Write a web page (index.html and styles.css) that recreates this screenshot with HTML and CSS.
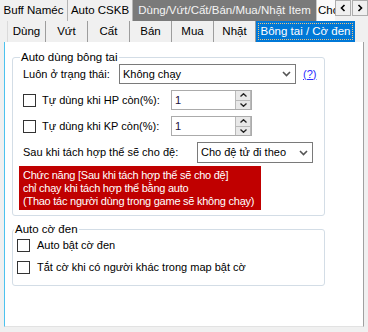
FILE: index.html
```html
<!DOCTYPE html>
<html lang="vi">
<head>
    <meta charset="UTF-8">
    <title>Bông tai / Cờ đen</title>
    <link rel="stylesheet" href="styles.css">
</head>
<body>

    <div class="top-tabs">
        <span class="ttab t-buff">Buff Naméc</span>
        <span class="ttab t-cskb">Auto CSKB</span>
        <span class="ttab t-item">Dùng/Vứt/Cất/Bán/Mua/Nhặt Item</span>
        <span class="ttab t-cho">Cho</span>
        <span class="scroll-btn">
            <svg width="6" height="8" viewBox="0 0 6 8"><polyline points="4.5,1 1.5,4 4.5,7" fill="none" stroke="#000" stroke-width="1.6"/></svg>
        </span>
        <span class="scroll-btn">
            <svg width="6" height="8" viewBox="0 0 6 8"><polyline points="1.5,1 4.5,4 1.5,7" fill="none" stroke="#000" stroke-width="1.6"/></svg>
        </span>
    </div>

    <div class="sub-tabs">
        <span class="stab s-dung">Dùng</span>
        <span class="stab">Vứt</span>
        <span class="stab">Cất</span>
        <span class="stab">Bán</span>
        <span class="stab">Mua</span>
        <span class="stab">Nhặt</span>
        <span class="stab active"><span class="focus">Bông tai / Cờ đen</span></span>
    </div>

    <div class="panel">
        <fieldset class="group group-bongtai">
            <legend>Auto dùng bông tai</legend>

            <div class="row">
                <span class="lbl lbl-state">Luôn ở trạng thái:</span>
                <span class="combo combo-state">
                    <span>Không chạy</span>
                    <svg width="9" height="6" viewBox="0 0 9 6"><polyline points="1,1 4.5,4.5 8,1" fill="none" stroke="#555" stroke-width="1.6"/></svg>
                </span>
                <a class="help">(?)</a>
            </div>

            <div class="row">
                <span class="check-label lbl-pct"><span class="box"></span>Tự dùng khi HP còn(%):</span>
                <span class="num">
                    <span class="num-val">1</span>
                    <span class="spin">
                        <span class="spin-btn"><svg width="7" height="4" viewBox="0 0 7 4"><polyline points="0.5,3.5 3.5,0.7 6.5,3.5" fill="none" stroke="#222" stroke-width="1.3"/></svg></span>
                        <span class="spin-btn"><svg width="7" height="4" viewBox="0 0 7 4"><polyline points="0.5,0.5 3.5,3.3 6.5,0.5" fill="none" stroke="#222" stroke-width="1.3"/></svg></span>
                    </span>
                </span>
            </div>

            <div class="row">
                <span class="check-label lbl-pct"><span class="box"></span>Tự dùng khi KP còn(%):</span>
                <span class="num">
                    <span class="num-val">1</span>
                    <span class="spin">
                        <span class="spin-btn"><svg width="7" height="4" viewBox="0 0 7 4"><polyline points="0.5,3.5 3.5,0.7 6.5,3.5" fill="none" stroke="#222" stroke-width="1.3"/></svg></span>
                        <span class="spin-btn"><svg width="7" height="4" viewBox="0 0 7 4"><polyline points="0.5,0.5 3.5,3.3 6.5,0.5" fill="none" stroke="#222" stroke-width="1.3"/></svg></span>
                    </span>
                </span>
            </div>

            <div class="row row-tach">
                <span class="lbl lbl-tach">Sau khi tách hợp thể sẽ cho đệ:</span>
                <span class="combo combo-de">
                    <span>Cho đệ tử đi theo</span>
                    <svg width="9" height="6" viewBox="0 0 9 6"><polyline points="1,1 4.5,4.5 8,1" fill="none" stroke="#555" stroke-width="1.6"/></svg>
                </span>
            </div>

            <div class="warning">
                Chức năng [Sau khi tách hợp thể sẽ cho đệ]<br>
                chỉ chạy khi tách hợp thể bằng auto<br>
                (Thao tác người dùng trong game sẽ không chạy)
            </div>
        </fieldset>

        <fieldset class="group group-co">
            <legend>Auto cờ đen</legend>
            <div class="co-row"><span class="box"></span>Auto bật cờ đen</div>
            <div class="co-row"><span class="box"></span>Tắt cờ khi có người khác trong map bật cờ</div>
        </fieldset>
    </div>

</body>
</html>
```

FILE: styles.css
```css
* {
    box-sizing: border-box;
}

body {
    margin: 0;
    width: 368px;
    height: 332px;
    overflow: hidden;
    background-color: #f0f0f0;
    font-family: "Liberation Sans", Arial, sans-serif;
    font-size: 11px;
    line-height: 13px;
    color: #000;
}

/* top tab row */
.top-tabs {
    display: flex;
    height: 21px;
}

.ttab {
    height: 21px;
    display: flex;
    align-items: center;
    justify-content: center;
    white-space: nowrap;
    border-right: 1px solid #b4b4b4;
    font-size: 11.5px;
}

.t-buff {
    width: 68px;
}

.t-cskb {
    width: 65px;
}

.t-item {
    width: 183px;
    background-color: #7a7a7a;
    color: #f4f4f4;
    border-right: none;
}

.t-cho {
    width: 19px;
    justify-content: flex-start;
    padding-left: 1px;
    overflow: hidden;
    background-color: #fbfbfb;
    border-left: 1px solid #c8c8c8;
    border-right: none;
}

.scroll-btn {
    width: 16px;
    height: 16px;
    display: flex;
    align-items: center;
    justify-content: center;
    background-color: #f0f0f0;
    border: 1px solid #adadad;
}

.scroll-btn + .scroll-btn {
    margin-left: 1px;
}

/* second tab row */
.sub-tabs {
    display: flex;
    height: 21px;
    padding-left: 7px;
}

.stab {
    width: 42px;
    height: 21px;
    display: flex;
    align-items: center;
    justify-content: center;
    white-space: nowrap;
    font-size: 11.5px;
    border-right: 1px solid #9d9d9d;
}

.s-dung {
    width: 39px;
    border-left: 1px solid #dadada;
}

.stab.active {
    width: 99px;
    background-color: #0078d7;
    color: #fff;
    border-right: none;
    padding: 2px;
}

.focus {
    width: 100%;
    height: 100%;
    display: flex;
    align-items: center;
    justify-content: center;
    border: 1px dotted #f3c37a;
}

/* content panel */
.panel {
    margin-left: 4px;
    width: 360px;
    height: 285px;
    background-color: #fff;
    border-left: 1px solid #4cc2ee;
    border-right: 1px solid #a0a0a0;
    border-bottom: 1px solid #e2e2e2;
    padding: 9px 0 0 7px;
}

.group {
    margin: 0;
    width: 313px;
    border: 1px solid #d3dde6;
    border-radius: 3px;
    padding: 0 0 0 10px;
}

.group legend {
    padding: 0 1px;
    margin-left: -3px;
    line-height: 13px;
    font-size: 11.5px;
}

.group-bongtai {
    height: 165px;
}

.group-co {
    height: 63px;
    margin-top: 7px;
    padding-left: 4px;
}

.row {
    display: flex;
    align-items: center;
    height: 20px;
    margin-bottom: 6px;
}

.lbl, .check-label {
    white-space: nowrap;
}

.lbl-state {
    width: 96px;
}

.lbl-pct {
    width: 148px;
    display: flex;
    align-items: center;
}

.lbl-tach {
    width: 174px;
}

.box {
    display: inline-block;
    width: 13px;
    height: 13px;
    border: 1px solid #333;
    background-color: #fff;
    margin-right: 6px;
    flex-shrink: 0;
}

.combo {
    height: 20px;
    display: flex;
    align-items: center;
    justify-content: space-between;
    border: 1px solid #7a7a7a;
    padding: 0 4px 0 3px;
    background-color: #fff;
}

.combo-state {
    width: 177px;
}

.combo-de {
    width: 116px;
    height: 21px;
}

.help {
    margin-left: 7px;
    color: #2b2bff;
    text-decoration: underline;
}

.num {
    width: 81px;
    height: 20px;
    display: flex;
    border: 1px solid #ababab;
    background-color: #fff;
}

.num-val {
    flex: 1;
    padding-left: 3px;
    display: flex;
    align-items: center;
    color: #1c1040;
}

.spin {
    width: 16px;
    display: flex;
    flex-direction: column;
    gap: 1px;
    background-color: #b9b9b9;
    padding: 0 1px;
}

.spin-btn {
    flex: 1;
    display: flex;
    align-items: center;
    justify-content: center;
    background-color: #e8e8e8;
}

.row-tach {
    height: 21px;
    margin-bottom: 3px;
}

.warning {
    margin-left: -4px;
    width: 242px;
    height: 44px;
    background-color: #c00000;
    color: #fff;
    padding: 3px 4px 2px 4px;
    line-height: 13px;
    letter-spacing: -0.25px;
    white-space: nowrap;
}

.co-row {
    display: flex;
    align-items: center;
    height: 19px;
    margin-bottom: 3px;
}

.co-row .box {
    margin-right: 7px;
}
```
